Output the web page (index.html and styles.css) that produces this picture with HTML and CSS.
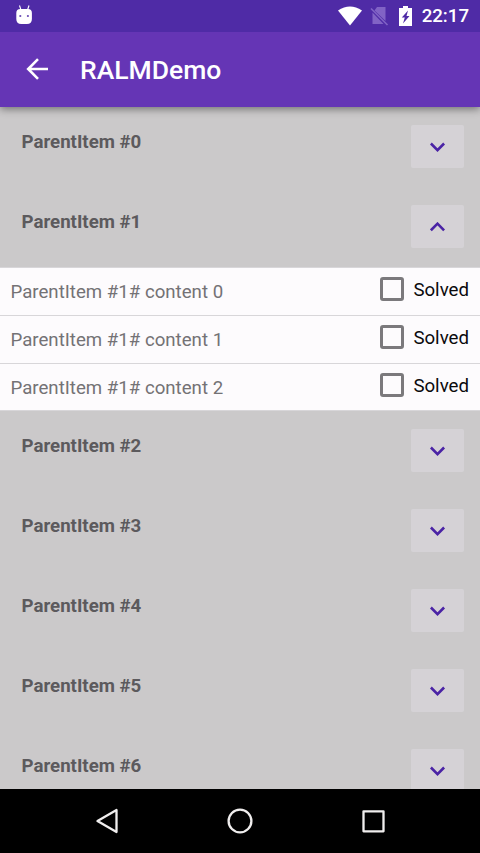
FILE: index.html
```
<!DOCTYPE html>
<html lang="en">
<head>
<meta charset="utf-8">
<title>RALMDemo</title>
<link rel="stylesheet" href="styles.css">
</head>
<body>
<svg width="0" height="0" class="defs">
  <symbol id="down" viewBox="0 0 16 10"><path d="M.9 1.500 7.500 8.100l6.600-6.600"/></symbol>
  <symbol id="up" viewBox="0 0 16 10"><path d="M.9 8.300 7.500 1.700l6.600 6.600"/></symbol>
</svg>
<header class="header">
  <div class="status">
    <svg class="robot" width="17" height="20" viewBox="0 0 17 20"><path d="M3.500 .500 5 5M13 .500 11.500 5" stroke="#fff" stroke-width="1.100"/><path d="M.300 8q0-4 4-4h7.600q4 0 4 4v6q0 5-5 5H5.300q-5 0-5-5z" fill="#fff"/><circle cx="4.300" cy="11" r="1.100" fill="#6a4bb5"/><circle cx="11.900" cy="11" r="1.100" fill="#6a4bb5"/></svg>
    <div class="status-icons">
      <svg width="24" height="20" viewBox="0 0 24 20"><path d="M0 4.500Q12-3.500 24 4.500L12 19.500z" fill="#fff"/></svg>
      <svg class="sim" width="19" height="20" viewBox="0 0 19 20"><path d="M7 1h8.500v14L4.500 4.500zM2.500 6.500 13.500 18H2.500z" fill="#8163c5"/><path d="M1 2.500 17.500 19" stroke="#8163c5" stroke-width="1.600"/></svg>
      <svg class="battery" width="13" height="20" viewBox="0 0 13 20"><path d="M4 0h5v2h4v18H0V2h4z" fill="#fff"/><path d="M9 4.500 2.800 11.500h3L4 17.500l6.500-7.500h-3z" fill="#4f2ba6"/></svg>
      <span class="clock">22:17</span>
    </div>
  </div>
  <div class="toolbar">
    <svg width="22" height="22" viewBox="0 0 22 22"><path d="M12 1.200 2.200 11l9.800 9.800M2.200 11H22" fill="none" stroke="#fff" stroke-width="2.600"/></svg>
    <h1 class="title">RALMDemo</h1>
  </div>
</header>
<main class="list">
  <div class="parent"><span>ParentItem #0</span><button class="toggle"><svg><use href="#down"/></svg></button></div>
  <div class="parent"><span>ParentItem #1</span><button class="toggle"><svg><use href="#up"/></svg></button></div>
  <div class="child"><span class="label">ParentItem #1# content 0</span><span class="check"><i class="box"></i>Solved</span></div>
  <div class="child"><span class="label">ParentItem #1# content 1</span><span class="check"><i class="box"></i>Solved</span></div>
  <div class="child last"><span class="label">ParentItem #1# content 2</span><span class="check"><i class="box"></i>Solved</span></div>
  <div class="parent"><span>ParentItem #2</span><button class="toggle"><svg><use href="#down"/></svg></button></div>
  <div class="parent"><span>ParentItem #3</span><button class="toggle"><svg><use href="#down"/></svg></button></div>
  <div class="parent"><span>ParentItem #4</span><button class="toggle"><svg><use href="#down"/></svg></button></div>
  <div class="parent"><span>ParentItem #5</span><button class="toggle"><svg><use href="#down"/></svg></button></div>
  <div class="parent"><span>ParentItem #6</span><button class="toggle"><svg><use href="#down"/></svg></button></div>
</main>
<nav class="nav">
  <svg width="26" height="26" viewBox="0 0 26 26"><path d="M3.500 13 22.500 2v22z"/></svg>
  <svg width="26" height="26" viewBox="0 0 26 26"><circle cx="13" cy="13" r="11.400"/></svg>
  <svg width="26" height="26" viewBox="0 0 26 26"><path d="M3.500 3.300h20v20h-20z"/></svg>
</nav>
</body>
</html>
```
FILE: styles.css
```
* { box-sizing: border-box; }
body {
  margin: 0;
  height: 853px;
  display: flex;
  flex-direction: column;
  overflow: hidden;
  font-family: Roboto, sans-serif;
  font-size: 18.67px;
  background: #cbc9ca;
}
svg { display: block; flex: none; }
.defs { display: none; }
.header {
  position: relative;
  z-index: 1;
  flex: none;
  height: 107px;
  color: #fff;
  background: #6535b5;
  box-shadow: 0 2px 8px rgba(0, 0, 0, .45);
}
.status {
  height: 32px;
  padding: 0 11px 0 16px;
  display: flex;
  align-items: center;
  justify-content: space-between;
  background: #4f2ba6;
}
.robot { margin-top: -3px; }
.status-icons { display: flex; align-items: center; }
.sim { margin-left: 8px; }
.battery { margin-left: 10px; }
.clock { margin-left: 10px; font-weight: 500; line-height: 34px; }
.toolbar {
  height: 75px;
  padding: 0 0 1px 26px;
  display: flex;
  align-items: center;
}
.title { margin: 2px 0 0 32px; font-size: 26.5px; font-weight: 500; line-height: 32px; }
.list { flex: 1; min-height: 0; overflow: hidden; }
.parent {
  height: 80px;
  padding: 18px 16px 0 21.5px;
  display: flex;
  justify-content: space-between;
  align-items: flex-start;
  color: #5c5a5d;
  font-weight: 700;
  line-height: 34px;
}
.toggle {
  width: 53px;
  height: 43px;
  padding: 0;
  border: 0;
  border-radius: 2px;
  display: flex;
  align-items: center;
  justify-content: center;
  background: #d5d2d6;
}
.toggle svg {
  width: 16px;
  height: 10px;
  fill: none;
  stroke: #4a23a5;
  stroke-width: 2.6;
}
.child {
  height: 48px;
  padding: 0 11px 0 10.5px;
  display: flex;
  justify-content: space-between;
  background: #fdfbfd;
  border-top: 1px solid #d8d6d9;
  line-height: 49px;
}
.last { border-bottom: 1px solid #d8d6d9; }
.label { color: #747275; }
.check { display: flex; color: #0b0a0c; line-height: 45px; }
.box {
  width: 24px;
  height: 24px;
  margin: 9px 9.5px 0 0;
  border: 3px solid #7b797c;
  border-radius: 3px;
}
.nav {
  flex: none;
  height: 64px;
  display: flex;
  align-items: center;
  justify-content: center;
  gap: 107px;
  background: #000;
}
.nav svg { fill: none; stroke: #f0eeee; stroke-width: 2.3; stroke-linejoin: round; }
```
